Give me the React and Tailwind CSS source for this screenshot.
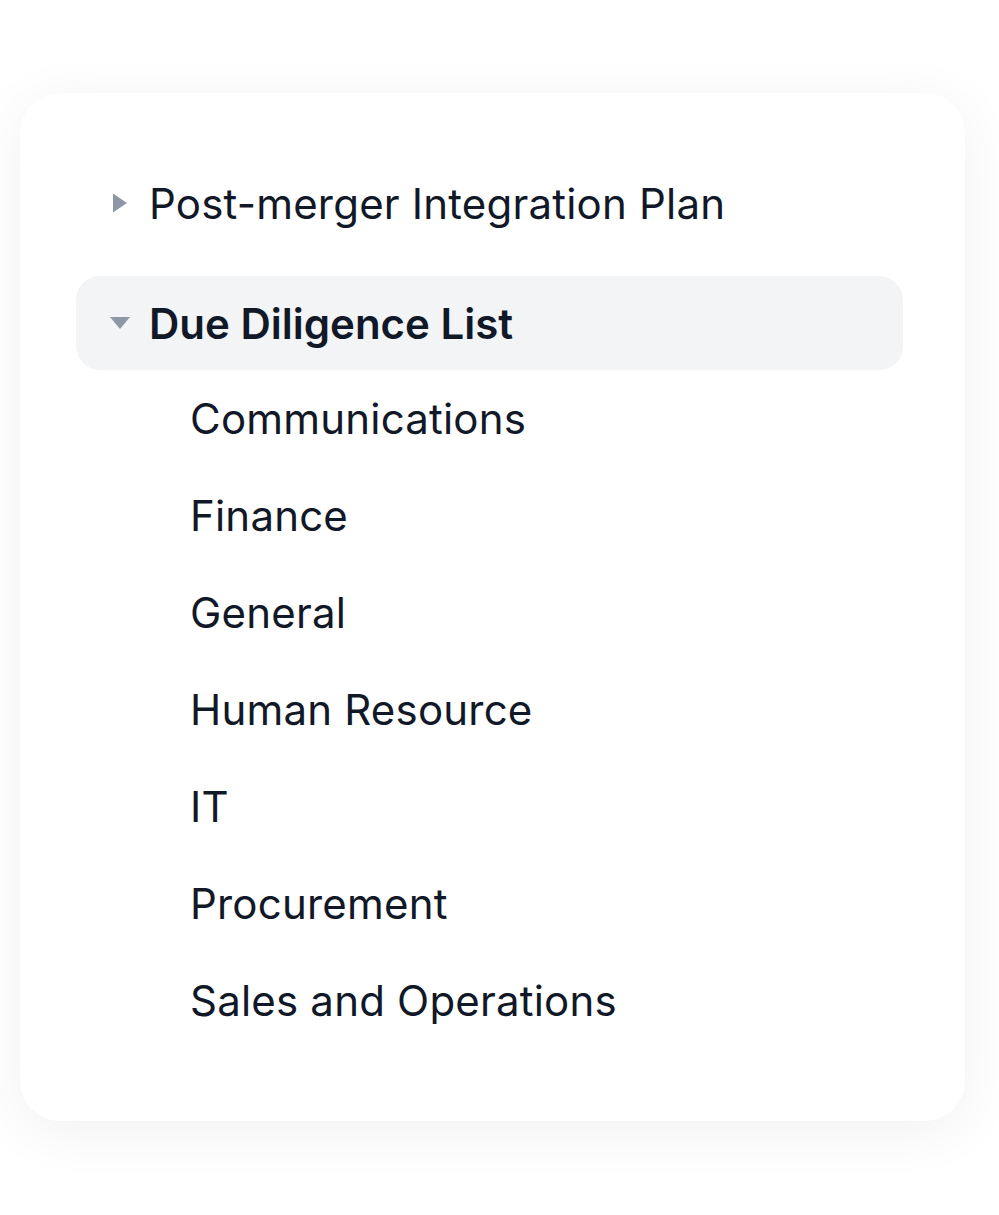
import React from 'react';

const children = [
  'Communications',
  'Finance',
  'General',
  'Human Resource',
  'IT',
  'Procurement',
  'Sales and Operations',
];

function Caret({ open }) {
  if (open) {
    return (
      <svg width="20" height="14" viewBox="0 0 20 14" className="shrink-0">
        <path d="M0 1 L20 1 L10 13 Z" fill="#8f97a6" />
      </svg>
    );
  }
  return (
    <svg width="20" height="20" viewBox="0 0 20 20" className="shrink-0">
      <path d="M3 0.5 L17 10 L3 19.5 Z" fill="#8f97a6" />
    </svg>
  );
}

export default function App() {
  return (
    <div
      className="min-h-[1215px] w-[999px] bg-white pt-[93px] pl-[20px]"
      style={{ fontFamily: 'Inter, "Noto Sans", sans-serif' }}
    >
      <div className="w-[945px] h-[1028px] rounded-[40px] bg-white shadow-[0_10px_60px_rgba(0,0,0,0.06)] pt-[63px] pl-[56px] pr-[62px]">
        <div className="flex items-center h-[94px] pl-[34px] gap-[19px] text-[#111827] text-[42px] tracking-[0.2px]">
          <Caret />
          <span>Post-merger Integration Plan</span>
        </div>
        <div className="mt-[26px] flex items-center h-[94px] pl-[34px] gap-[19px] rounded-[24px] bg-[#f3f4f6] text-[#111827] text-[42px] font-semibold">
          <Caret open />
          <span>Due Diligence List</span>
        </div>
        <div className="flex flex-col">
          {children.map((c) => (
            <div key={c} className="h-[97px] flex items-center pl-[114px] text-[42px] text-[#111827] tracking-[0.2px]">
              {c}
            </div>
          ))}
        </div>
      </div>
    </div>
  );
}
